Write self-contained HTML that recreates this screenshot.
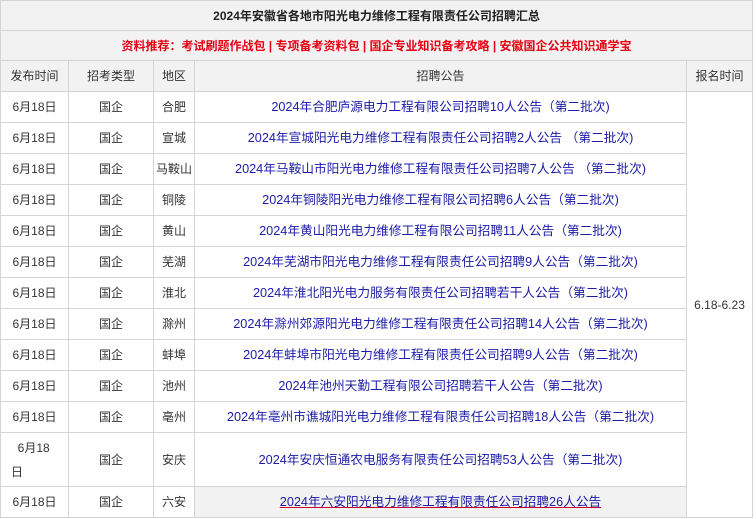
<!DOCTYPE html>
<html><head><meta charset="utf-8"><style>
body{margin:0;background:#fff;font-family:"Liberation Sans","Noto Sans CJK SC",sans-serif;font-size:12px;color:#333}
table{position:absolute;left:0;top:0;border-collapse:collapse;width:752px;table-layout:fixed}
td{border:1px solid #d4d4d4;text-align:center;padding:0;height:30px;line-height:18px}
.g td,td.g{background:#f2f2f2}
a{color:#1c1ca8;text-decoration:none;font-size:12.7px}
.r{color:#e60012;font-weight:bold}
</style></head><body>
<table>
<col style="width:68px"><col style="width:85px"><col style="width:41px"><col style="width:492px"><col style="width:66px">
<tr class="g"><td colspan="5" style="font-weight:bold;color:#222;height:29px">2024年安徽省各地市阳光电力维修工程有限责任公司招聘汇总</td></tr>
<tr class="g"><td colspan="5" class="r" style="height:29px">资料推荐：考试刷题作战包 | 专项备考资料包 | 国企专业知识备考攻略 | 安徽国企公共知识通学宝</td></tr>
<tr class="g"><td>发布时间</td><td>招考类型</td><td>地区</td><td>招聘公告</td><td>报名时间</td></tr>
<tr><td>6月18日</td><td>国企</td><td>合肥</td><td><a>2024年合肥庐源电力工程有限公司招聘10人公告（第二批次)</a></td><td rowspan="13">6.18-6.23</td></tr>
<tr><td>6月18日</td><td>国企</td><td>宣城</td><td><a>2024年宣城阳光电力维修工程有限责任公司招聘2人公告 （第二批次)</a></td></tr>
<tr><td>6月18日</td><td>国企</td><td>马鞍山</td><td><a>2024年马鞍山市阳光电力维修工程有限责任公司招聘7人公告 （第二批次)</a></td></tr>
<tr><td>6月18日</td><td>国企</td><td>铜陵</td><td><a>2024年铜陵阳光电力维修工程有限公司招聘6人公告（第二批次)</a></td></tr>
<tr><td>6月18日</td><td>国企</td><td>黄山</td><td><a>2024年黄山阳光电力维修工程有限公司招聘11人公告（第二批次)</a></td></tr>
<tr><td>6月18日</td><td>国企</td><td>芜湖</td><td><a>2024年芜湖市阳光电力维修工程有限责任公司招聘9人公告（第二批次)</a></td></tr>
<tr><td>6月18日</td><td>国企</td><td>淮北</td><td><a>2024年淮北阳光电力服务有限责任公司招聘若干人公告（第二批次)</a></td></tr>
<tr><td>6月18日</td><td>国企</td><td>滁州</td><td><a>2024年滁州郊源阳光电力维修工程有限责任公司招聘14人公告（第二批次)</a></td></tr>
<tr><td>6月18日</td><td>国企</td><td>蚌埠</td><td><a>2024年蚌埠市阳光电力维修工程有限责任公司招聘9人公告（第二批次)</a></td></tr>
<tr><td>6月18日</td><td>国企</td><td>池州</td><td><a>2024年池州天勤工程有限公司招聘若干人公告（第二批次)</a></td></tr>
<tr><td>6月18日</td><td>国企</td><td>亳州</td><td><a>2024年亳州市谯城阳光电力维修工程有限责任公司招聘18人公告（第二批次)</a></td></tr>
<tr><td style="height:53px;line-height:24px;text-align:left;padding-left:10px">&nbsp;&nbsp;6月18<br>日</td><td>国企</td><td>安庆</td><td><a>2024年安庆恒通农电服务有限责任公司招聘53人公告（第二批次)</a></td></tr>
<tr><td>6月18日</td><td>国企</td><td>六安</td><td class="g"><a style="text-decoration:underline;text-decoration-color:#c03">2024年六安阳光电力维修工程有限责任公司招聘26人公告</a></td></tr>
</table>
</body></html>
